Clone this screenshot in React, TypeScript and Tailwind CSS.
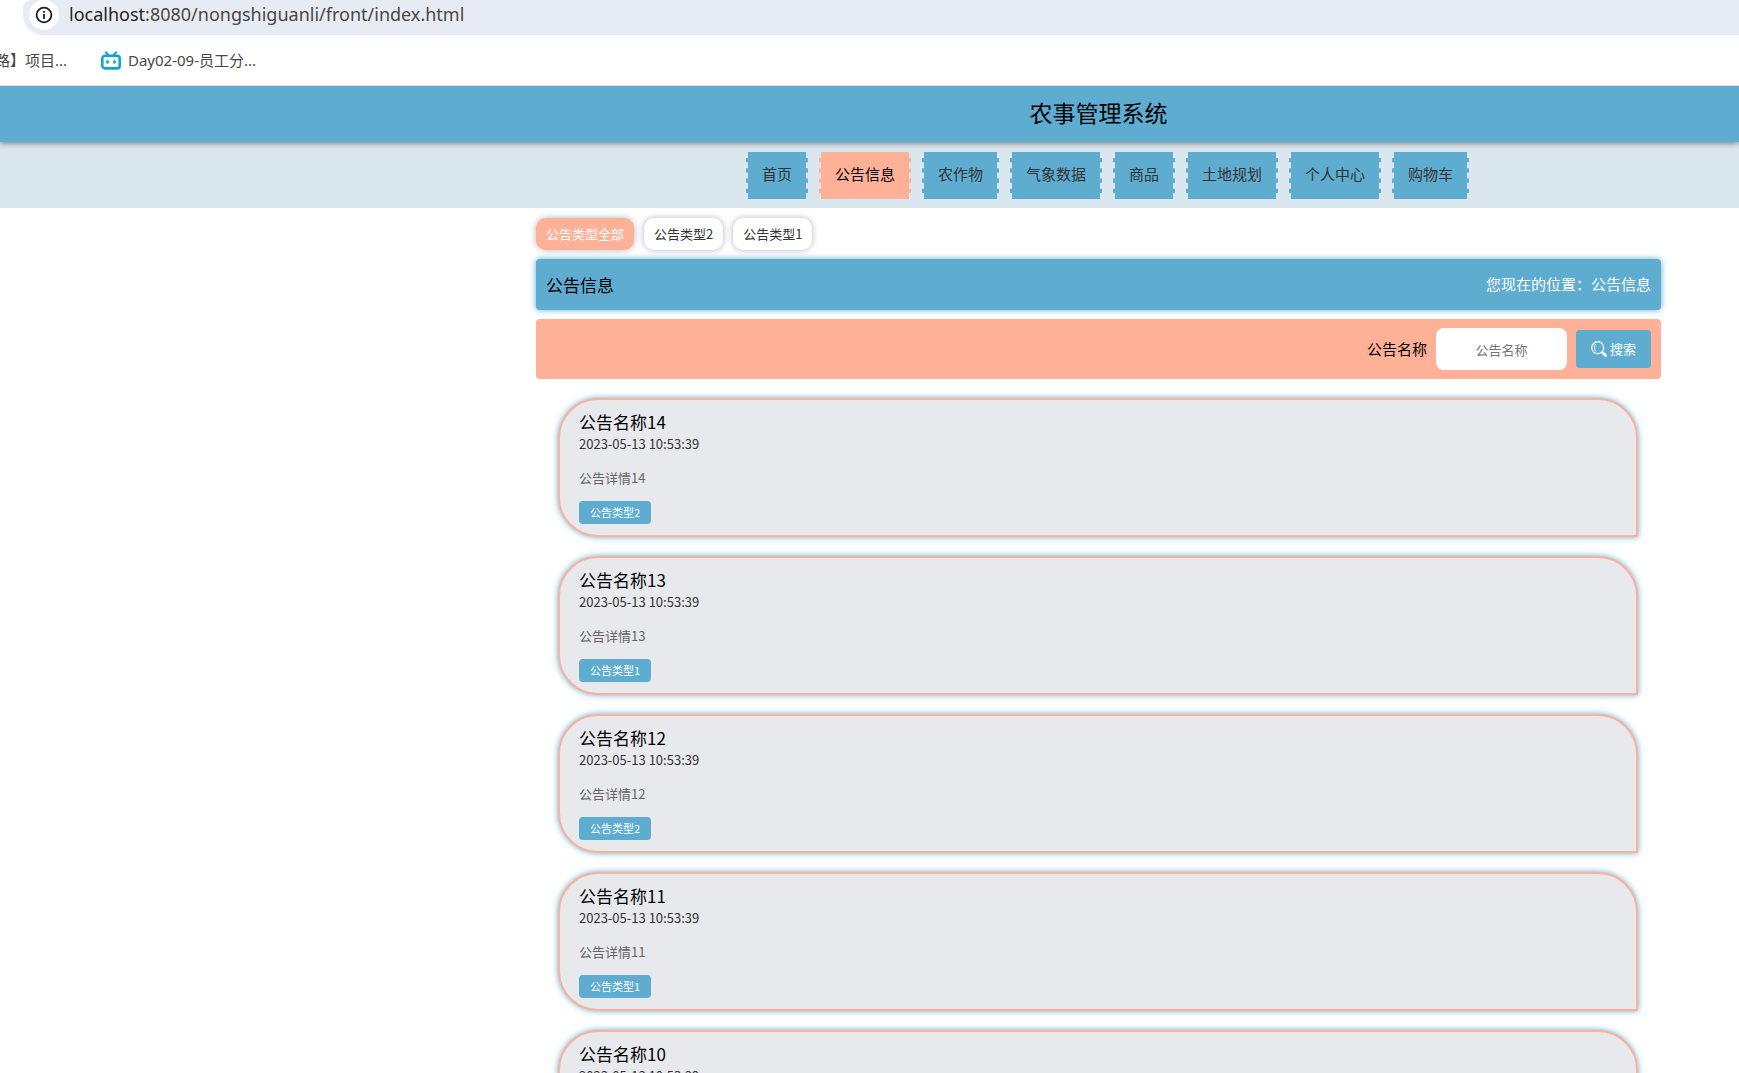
const navItems = [
  { name: "首页", path: "#home" },
  { name: "公告信息", path: "#notice", active: true },
  { name: "农作物", path: "#crops" },
  { name: "气象数据", path: "#weather" },
  { name: "商品", path: "#goods" },
  { name: "土地规划", path: "#land" },
  { name: "个人中心", path: "#me" },
  { name: "购物车", path: "#cart" },
];

const categories = ["公告类型全部", "公告类型2", "公告类型1"];

const notices = [
  { id: 14, type: "公告类型2" },
  { id: 13, type: "公告类型1" },
  { id: 12, type: "公告类型2" },
  { id: 11, type: "公告类型1" },
  { id: 10, type: "公告类型2" },
];

function InfoIcon() {
  return (
    <svg viewBox="0 0 18 18" className="size-[18px]" fill="none" stroke="#1f1f1f" strokeWidth="1.8">
      <circle cx="9" cy="9" r="7.4" />
      <path d="M9 8v5M9 5v1.8" />
    </svg>
  );
}

function BilibiliIcon() {
  return (
    <svg viewBox="0 0 20 19" className="h-[19px] w-5 shrink-0" fill="none" stroke="#0ea5dc" strokeWidth="2.6" strokeLinecap="round">
      <rect x="1.3" y="4.8" width="17.4" height="12.6" rx="2.6" />
      <path d="M5 1.4 7.4 4M15 1.4 12.6 4" strokeWidth="2.2" />
      <path d="M6.5 10.3v1.2M13.5 10.3v1.2" />
    </svg>
  );
}

function SearchIcon() {
  return (
    <svg viewBox="0 0 16 16" className="size-4" fill="none" stroke="#fff" strokeLinecap="round">
      <circle cx="6.7" cy="6.7" r="6" strokeWidth="1.2" />
      <path d="M4.6 3.4c-1.6 1.8-1.6 4.6 0 6.6" strokeWidth="1" />
      <path d="m12 12 2.6 2.6" strokeWidth="2.8" />
    </svg>
  );
}

export default function App() {
  return (
    <div className="h-screen overflow-hidden bg-white font-['Noto_Sans_CJK_SC',sans-serif] text-[#333]">

      {/* Browser bar */}
      <div className="ml-[23px] flex h-[35px] items-start rounded-tl-lg rounded-bl-[20px] bg-[#e7ecf4]">
        <div className="ml-1.5 flex size-[30px] items-center justify-center rounded-full bg-white">
          <InfoIcon />
        </div>
        <div className="ml-2.5 font-['Noto_Sans',sans-serif] text-lg leading-7 text-[#474747]">
          <span className="text-[#1f1f1f]">localhost</span>:8080/nongshiguanli/front/index.html
        </div>
      </div>

      {/* Bookmarks */}
      <div className="relative z-10 flex h-[51px] items-center border-b border-[#dfe3e6] bg-white font-['Noto_Sans','Noto_Sans_CJK_SC',sans-serif] text-[15px] text-[#474747]">
        <a href="#b1" className="flex w-[67px] justify-end overflow-hidden whitespace-nowrap">路】项目...</a>
        <a href="#b2" className="ml-[34px] flex items-center gap-[7px]">
          <BilibiliIcon />
          Day02-09-员工分...
        </a>
      </div>

      {/* Header */}
      <header className="relative h-14 bg-[#5eacd0] pl-[458px] text-center shadow-[0_1px_6px_rgba(0,0,0,0.5)]">
        <h1 className="text-[23px] leading-[52px] text-black">农事管理系统</h1>
      </header>
      <nav className="flex h-[66px] justify-center gap-[11px] bg-[#dae7ef] pt-2.5 pl-[476px]">
        {navItems.map((item) => (
          <a
            key={item.name}
            href={item.path}
            className={`h-[47px] border-x-2 border-dashed border-[#dae7ef] px-3.5 text-[15px] leading-[44px] whitespace-nowrap ${
              item.active ? "bg-[#ffb197] text-black" : "bg-[#5eacd0]"
            }`}
          >
            {item.name}
          </a>
        ))}
      </nav>

      <main className="pl-[458px]">
        <div className="mx-auto max-w-[1125px]">

          {/* Categories */}
          <div className="flex gap-2.5 pt-2.5 text-[13px]">
            {categories.map((name, index) => (
              <button
                key={name}
                className={`h-8 rounded-[10px] px-2.5 shadow-[0_0_6px_rgba(0,0,0,0.3)] ${
                  index === 0 ? "bg-[#ffb197] text-white" : "bg-white"
                }`}
              >
                {name}
              </button>
            ))}
          </div>

          <div className="mt-[9px] flex h-[51px] items-center justify-between rounded bg-[#5eacd0] px-2.5 shadow-[0_0_6px_#5eacd0]">
            <h2 className="text-[17px] text-black">公告信息</h2>
            <span className="text-[15px] text-white">您现在的位置：公告信息</span>
          </div>

          {/* Search */}
          <form className="mt-[9px] flex h-[60px] items-center justify-end gap-[9px] rounded bg-[#ffb197] px-2.5">
            <label htmlFor="title" className="text-[15px] text-black">公告名称</label>
            <input
              id="title"
              placeholder="公告名称"
              className="h-[42px] w-[131px] rounded-lg bg-white text-center text-[13px] placeholder:text-[#757575]"
            />
            <button type="button" className="flex h-[38px] w-[75px] items-center justify-center gap-[3px] rounded bg-[#5eacd0] text-[13px] text-white">
              <SearchIcon />
              搜索
            </button>
          </form>

          {/* Notices */}
          <div className="mt-[19px] mr-[23px] ml-[22px] flex flex-col gap-[19px]">
            {notices.map((notice) => (
              <article
                key={notice.id}
                className="rounded-[40px] rounded-br-none border-2 border-[#ffb197] bg-[#e8e9ed] px-[19px] pt-2.5 pb-[11px] shadow-[0_0_6px_#5eacd0]"
              >
                <h3 className="text-[17px] leading-6 text-black">公告名称{notice.id}</h3>
                <p className="text-[13px] leading-5">2023-05-13 10:53:39</p>
                <p className="mt-3.5 text-[13px] leading-5 text-[#666]">公告详情{notice.id}</p>
                <span className="mt-[13px] block h-[23px] w-fit rounded bg-[#5eacd0] px-[11px] text-[11px] leading-[22px] text-white">
                  {notice.type}
                </span>
              </article>
            ))}
          </div>
        </div>
      </main>
    </div>
  );
}
